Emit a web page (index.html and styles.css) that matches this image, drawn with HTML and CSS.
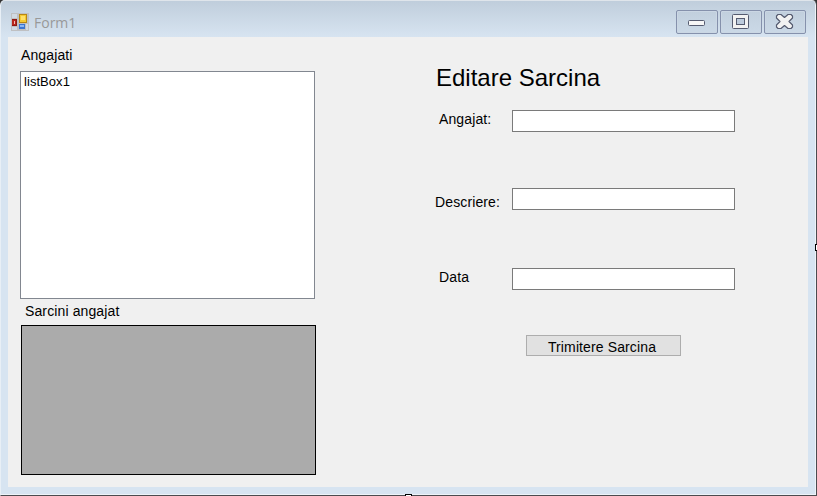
FILE: index.html
```html
<!DOCTYPE html>
<html lang="ro">
<head>
<meta charset="utf-8">
<title>Form1</title>
<link rel="stylesheet" href="styles.css">
</head>
<body>
<div class="window">
  <header class="titlebar">
    <svg class="app-icon" width="18" height="18" viewBox="0 0 18 18" shape-rendering="crispEdges">
      <path fill="#bfc0c2" d="M0 0h18v18H0z"/>
      <path fill="#d1dae3" d="M1 1h5v4H1zM1 14h5v3H1z"/>
      <path fill="#8f1a12" d="M1 6h5v7H1z"/><path fill="#b8261b" d="M1 7h4v5H1z"/><path fill="#f0b5ad" d="M3 8h1v3H3z"/>
      <path fill="#b88712" d="M8 1h8v9H8z"/><path fill="#f5ca32" d="M9 2h6v7H9z"/><path fill="#ffe169" d="M10 3h4v4h-4z"/>
      <path fill="#3c75cf" d="M8 11h6v5H8z"/><path fill="#8bb6f3" d="M9 12h4v2H9z"/><path fill="#d1dae3" d="M15 11h2v6h-2z"/>
    </svg>
    <span class="title">Form1</span>
    <div class="controls">
      <button class="control" aria-label="Minimize"><svg width="40" height="22" viewBox="0 0 40 22"><rect x="11.5" y="9.500" width="16" height="5" rx="1" fill="#f6f6f6" stroke="#555b70"/></svg></button>
      <button class="control" aria-label="Maximize"><svg width="40" height="22" viewBox="0 0 40 22"><rect x="11.5" y="3.5" width="16" height="14" rx="1" fill="#f2f2f2" stroke="#555b70"/><rect x="15.5" y="7.5" width="8" height="6" fill="#bdcbdc" stroke="#555b70"/></svg></button>
      <button class="control" aria-label="Close"><svg width="40" height="22" viewBox="0 0 40 22"><path d="M13 3.500h3l3.500 3 3.500-3h3l1.500 1.500v2l-3.500 3.500 3.500 3.500v2L26 17.500h-3l-3.500-3-3.500 3h-3L11.500 16v-2l3.500-3.500L11.500 7V5z" fill="#f2f2f2" stroke="#555b70" stroke-width="1.200" stroke-linejoin="round"/></svg></button>
    </div>
  </header>
  <main class="client">
    <section class="employees">
      <div class="label">Angajati</div>
      <div class="listbox">listBox1</div>
      <div class="label grid-label">Sarcini angajat</div>
      <div class="datagrid"></div>
    </section>
    <form class="editor">
      <h1 class="heading">Editare Sarcina</h1>
      <div class="field"><label class="label indented" for="angajat">Angajat:</label><input class="input" id="angajat"></div>
      <div class="field field-description"><label class="label" for="descriere">Descriere:</label><input class="input" id="descriere"></div>
      <div class="field field-date"><label class="label indented" for="data">Data</label><input class="input" id="data"></div>
      <button class="submit" type="button">Trimitere Sarcina</button>
    </form>
  </main>
  <span class="handle handle-right"></span>
  <span class="handle handle-bottom"></span>
</div>
</body>
</html>
```
FILE: styles.css
```css
* { box-sizing: border-box; }
body {
  margin: 0;
  overflow: hidden;
  background: #333;
  font: 14px/16px "Liberation Sans", Arial, sans-serif;
  color: #000;
}
.window {
  position: relative;
  width: 817px;
  height: 496px;
  padding: 0 8px 8px 7px;
  background: linear-gradient(#bfcddb, #d7e4f1 37px);
  border: solid #4b4b4f;
  border-width: 0 1px 1px 0;
  border-left: 1px solid #e8eff6;
  border-radius: 5px 5px 0 0;
  box-shadow: inset 0 1px #dfe5eb, inset -1px -1px #eef3f8;
}
.titlebar { height: 37px; display: flex; align-items: flex-start; padding: 0 2px 0 3px; }
.app-icon { margin-top: 13px; flex: none; }
.title {
  margin: 13px 0 0 5px;
  font: 14px/19px "Open Sans", sans-serif;
  color: #999;
}
.controls { display: flex; gap: 2px; margin: 10px 0 0 auto; }
.control {
  width: 42px;
  height: 24px;
  padding: 0;
  border: 1px solid #8591ac;
  border-radius: 2px;
  background: linear-gradient(#c1cfdd, #cbd9e7);
  box-shadow: inset 0 0 0 1px #cbd7e4;
}
.control svg { display: block; }
.client {
  width: 800px;
  height: 450px;
  display: flex;
  background: #f0f0f0;
}
.label { letter-spacing: 0.12px; white-space: nowrap; }
.employees { width: 427px; padding: 10px 0 0 12px; }
.employees .label { padding-left: 1px; }
.listbox {
  width: 295px;
  height: 228px;
  margin-top: 8px;
  padding: 2px 3px;
  border: 1px solid #828790;
  background: #fff;
  font-size: 13px;
  letter-spacing: 0.05px;
}
.employees .grid-label { margin-top: 4px; padding-left: 5px; }
.datagrid {
  width: 295px;
  height: 150px;
  margin: 6px 0 0 1px;
  border: 1px solid #000;
  background: #ababab;
}
.editor { width: 300px; padding-top: 27px; }
.heading { margin: 0; padding-left: 1px; font-size: 24px; font-weight: 400; line-height: 28px; }
.field { display: flex; height: 22px; margin-top: 18px; }
.field .label { width: 77px; padding-top: 1px; }
.field .indented { padding-left: 4px; }
.field-description { margin-top: 56px; }
.field-description .label { padding-top: 6px; }
.field-date { margin-top: 58px; }
.input { width: 223px; height: 22px; border: 1px solid #7a7a7a; background: #fff; outline: 0; }
.submit {
  display: block;
  width: 155px;
  height: 21px;
  margin: 45px 0 0 91px;
  padding: 3px 0 0 0;
  border: 1px solid #adadad;
  background: #e1e1e1;
  font: 14px/16px "Liberation Sans", Arial, sans-serif;
  letter-spacing: 0.12px;
  text-indent: -3px;
  color: #000;
}
.handle { position: absolute; background: #fff; border: 1px solid #000; }
.handle-right { right: -1px; top: 244px; width: 2px; height: 7px; border-right: 0; }
.handle-bottom { left: 404px; bottom: -1px; width: 7px; height: 2px; border-bottom: 0; }
```
